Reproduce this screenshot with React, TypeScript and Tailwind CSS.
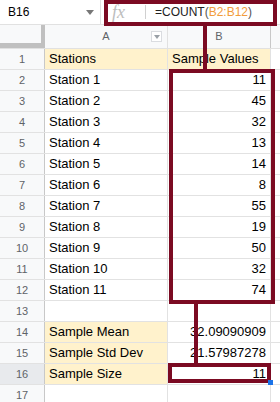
const values = [11, 45, 32, 13, 14, 8, 55, 19, 50, 32, 74];

type Row = { n: number; a?: string; b?: string; yellow?: boolean; head?: boolean };

const rows: Row[] = [
  { n: 1, a: 'Stations', b: 'Sample Values', yellow: true, head: true },
  ...values.map((v, i) => ({ n: i + 2, a: `Station ${i + 1}`, b: String(v) })),
  { n: 13 },
  { n: 14, a: 'Sample Mean', b: '32.09090909', yellow: true },
  { n: 15, a: 'Sample Std Dev', b: '21.57987278', yellow: true },
  { n: 16, a: 'Sample Size', b: '11', yellow: true },
  { n: 17 },
];

export default function App() {
  return (
    <div className="relative w-[280px] h-[402px] overflow-hidden bg-white font-['Liberation_Sans',Arial,sans-serif] text-black">
      {/* formula bar */}
      <div className="flex h-[25px] border-b border-[#e1e1e1]">
        <div className="flex w-[101px] items-center justify-between border-r border-[#e1e1e1] pl-2 pr-[6px]">
          <span className="text-[12px]">B16</span>
          <svg width="8" height="5" viewBox="0 0 8 5">
            <path d="M0 0h8L4 5z" fill="#777" />
          </svg>
        </div>
        <div className="flex flex-1 items-center">
          <span className="w-[44px] pl-[11px] font-['Liberation_Serif',serif] text-[18px] italic text-[#bdbdbd]">fx</span>
          <div className="h-[14px] w-px bg-[#d0d0d0]" />
          <span className="pl-[9px] text-[12px] text-[#222]">
            =COUNT<span className="text-[#555]">(</span>
            <span className="text-[#f29c3a]">B2:B12</span>
            <span className="text-[#555]">)</span>
          </span>
        </div>
      </div>

      {/* column header */}
      <div className="flex h-[24px] border-b border-[#e1e1e1] bg-[#f8f9fa] text-[11px] text-[#5f6368]">
        <div className="w-[45px] border-r-4 border-b-[5px] border-[#c0c0c0] bg-[#f8f9fa]" />
        <div className="relative flex w-[123px] items-center justify-center border-r border-[#e1e1e1]">
          A
          <div className="absolute right-[5px] top-[6px] flex h-[11px] w-[11px] items-center justify-center border border-[#dadce0] bg-white">
            <svg width="6" height="4" viewBox="0 0 6 4">
              <path d="M0 0h6L3 4z" fill="#9aa0a6" />
            </svg>
          </div>
        </div>
        <div className="flex w-[103px] items-center justify-center border-r border-[#c8c8c8]">B</div>
        <div className="flex-1" />
      </div>

      {/* rows */}
      {rows.map((r) => (
        <div key={r.n} className="flex h-[21px] border-b border-[#e2e2e2] text-[13px]">
          <div
            className={`flex w-[45px] items-center justify-center border-r border-[#c8c8c8] text-[11px] text-[#5f6368] ${
              r.n === 16 ? 'bg-[#e8eaed]' : 'bg-[#f8f9fa]'
            }`}
          >
            {r.n}
          </div>
          <div
            className={`flex w-[123px] items-center border-r border-[#e2e2e2] pl-1 ${r.yellow ? 'bg-[#fff2cc]' : ''}`}
          >
            {r.a}
          </div>
          <div
            className={`flex w-[103px] items-center border-r border-[#e2e2e2] px-1 ${
              r.head ? 'justify-start bg-[#fff2cc]' : 'justify-end'
            }`}
          >
            {r.b}
          </div>
          <div className="flex-1" />
        </div>
      ))}

      {/* annotations */}
      <div className="absolute left-[104px] top-0 h-[26px] w-[173px] border-4 border-[#7b0a22]" />
      <div className="absolute left-[203px] top-[26px] h-[44px] w-1 bg-[#7b0a22]" />
      <div className="absolute left-[169px] top-[69px] h-[235px] w-[106px] border-4 border-[#7b0a22]" />
      <div className="absolute left-[194px] top-[304px] h-[60px] w-1 bg-[#7b0a22]" />
      <div className="absolute left-[168px] top-[363px] h-[20px] w-[103px] border-4 border-[#7b0a22]" />
      <div className="absolute left-[268px] top-[380px] h-[5px] w-[5px] bg-[#1a73e8]" />
    </div>
  );
}
